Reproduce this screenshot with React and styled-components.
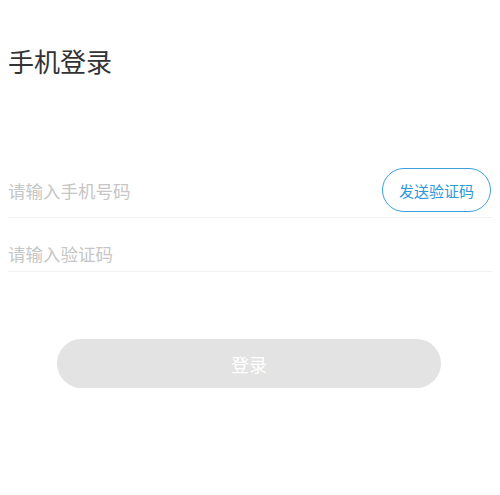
import React, { useState } from "react";
import styled, { createGlobalStyle } from "styled-components";

const GlobalStyle = createGlobalStyle`
  html, body {
    margin: 0;
    padding: 0;
    background: #ffffff;
  }
  body {
    font-family: "Noto Sans CJK SC", "Noto Sans", sans-serif;
  }
  * {
    box-sizing: border-box;
  }
`;

const Page = styled.div`
  width: 500px;
  height: 495px;
  padding: 0 8px;
  background: #ffffff;
`;

const Title = styled.h1`
  margin: 0;
  padding-top: 46px;
  font-size: 26px;
  line-height: 29px;
  font-weight: 400;
  color: #333333;
`;

const Form = styled.div`
  margin-top: 93px;
  display: flex;
  flex-direction: column;
`;

const Row = styled.div`
  display: flex;
  align-items: center;
  gap: 12px;
  padding: ${(p) => p.$pad || "0"};
  border-bottom: 1px solid #f1f1f1;
`;

const Input = styled.input`
  flex: 1;
  min-width: 0;
  height: ${(p) => p.$h || "36px"};
  border: none;
  outline: none;
  padding: 0;
  background: transparent;
  font-family: inherit;
  font-size: 17.5px;
  color: #333333;

  &::placeholder {
    color: #c6c6c6;
  }
`;

const CodeButton = styled.button`
  flex: none;
  width: 109px;
  height: 44px;
  margin-right: 1px;
  border: 1.5px solid #3b9fdf;
  border-radius: 22px;
  background: #ffffff;
  color: #2e98d9;
  font-family: inherit;
  font-size: 15px;
  cursor: pointer;
`;

const LoginButton = styled.button`
  align-self: flex-start;
  margin: 67px 0 0 49px;
  width: 384px;
  height: 49px;
  border: none;
  border-radius: 25px;
  background: #e3e3e3;
  color: #ffffff;
  font-family: inherit;
  font-size: 18px;
  cursor: pointer;
`;

export default function App() {
  const [phone, setPhone] = useState("");
  const [code, setCode] = useState("");

  return (
    <>
      <GlobalStyle />
      <Page>
        <Title>手机登录</Title>
        <Form>
          <Row $pad="0 0 5px 0">
            <Input
              $h="44px"
              placeholder="请输入手机号码"
              value={phone}
              onChange={(e) => setPhone(e.target.value)}
            />
            <CodeButton>发送验证码</CodeButton>
          </Row>
          <Row $pad="17px 0 0 0">
            <Input
              placeholder="请输入验证码"
              value={code}
              onChange={(e) => setCode(e.target.value)}
            />
          </Row>
          <LoginButton>登录</LoginButton>
        </Form>
      </Page>
    </>
  );
}
